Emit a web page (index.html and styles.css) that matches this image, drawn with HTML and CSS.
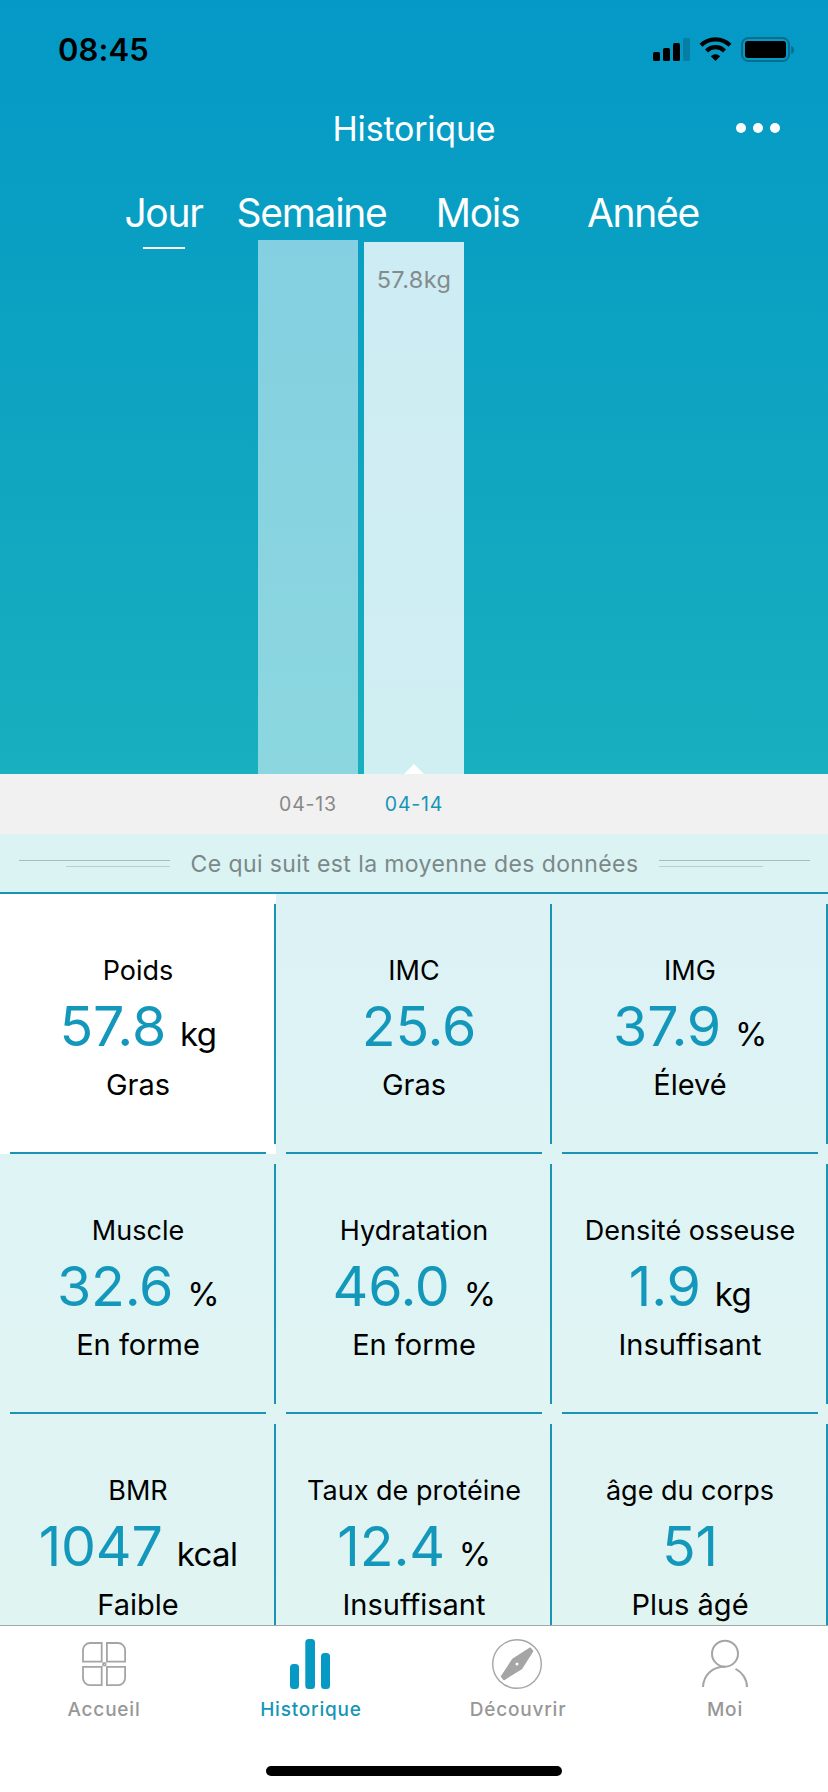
FILE: index.html
```html
<!DOCTYPE html>
<html lang="fr">
<head>
<meta charset="UTF-8">
<title>Historique</title>
<meta name="viewport" content="width=device-width, initial-scale=1.0">
<link rel="stylesheet" href="styles.css">
</head>
<body>
<div class="hero">
    <div class="status-bar">
        <span class="time">08:45</span>
        <svg class="status-icons" width="142" height="26" viewBox="0 0 142 26">
            <rect x="0" y="15" width="7" height="9" rx="1.5"/>
            <rect x="10" y="11" width="7" height="13" rx="1.5"/>
            <rect x="20" y="6" width="7" height="18" rx="1.5"/>
            <rect x="30" y="1" width="7" height="23" rx="1.5" fill="#067ea3"/>
            <g fill="none" stroke="#000" stroke-width="4.2">
                <path d="M48 8.3a20.6 20.6 0 0 1 29 0"/>
                <path d="M53.5 13.9a12.8 12.8 0 0 1 18 0"/>
            </g>
            <path d="M57.8 19.2a6.8 6.8 0 0 1 9.4 0L62.5 24z"/>
            <rect x="89" y="1" width="47" height="23" rx="6.5" fill="none" stroke="#0a6d8b" stroke-width="2"/>
            <rect x="92" y="4" width="41" height="17" rx="3"/>
            <path d="M138.2 9c3.8 1 3.8 7 0 8z" fill="#0a6d8b"/>
        </svg>
    </div>
    <div class="nav">
        <h1>Historique</h1>
        <div class="more"><i></i><i></i><i></i></div>
    </div>
    <div class="periods">
        <span class="active">Jour</span>
        <span>Semaine</span>
        <span>Mois</span>
        <span>Année</span>
    </div>
    <div class="chart">
        <div class="bar" style="height: 534px"></div>
        <div class="bar current" style="height: 532px">57.8kg</div>
    </div>
</div>
<div class="dates">
    <span>04-13</span>
    <span class="active">04-14</span>
</div>
<div class="notice">
    <div class="rule left"></div>
    <p>Ce qui suit est la moyenne des données</p>
    <div class="rule right"></div>
</div>
<div class="grid">
    <div class="cell selected">
        <p class="label">Poids</p>
        <p class="value">57.8<small>kg</small></p>
        <p class="state">Gras</p>
    </div>
    <div class="cell">
        <p class="label">IMC</p>
        <p class="value no-unit">25.6</p>
        <p class="state">Gras</p>
    </div>
    <div class="cell">
        <p class="label">IMG</p>
        <p class="value">37.9<small>%</small></p>
        <p class="state">Élevé</p>
    </div>
    <div class="cell">
        <p class="label">Muscle</p>
        <p class="value">32.6<small>%</small></p>
        <p class="state">En forme</p>
    </div>
    <div class="cell">
        <p class="label">Hydratation</p>
        <p class="value">46.0<small>%</small></p>
        <p class="state">En forme</p>
    </div>
    <div class="cell">
        <p class="label">Densité osseuse</p>
        <p class="value">1.9<small>kg</small></p>
        <p class="state">Insuffisant</p>
    </div>
    <div class="cell">
        <p class="label">BMR</p>
        <p class="value">1047<small>kcal</small></p>
        <p class="state">Faible</p>
    </div>
    <div class="cell">
        <p class="label">Taux de protéine</p>
        <p class="value">12.4<small>%</small></p>
        <p class="state">Insuffisant</p>
    </div>
    <div class="cell">
        <p class="label">âge du corps</p>
        <p class="value">51</p>
        <p class="state">Plus âgé</p>
    </div>
</div>
<div class="tab-bar">
    <div class="tabs">
        <div class="tab">
            <svg width="52" height="52" viewBox="0 0 52 52" fill="none" stroke="#a5a5a5" stroke-width="1.8">
                <path d="M12 5h11.7v18.7H5V12a7 7 0 0 1 7-7z"/>
                <path d="M28.9 5h11.2a7 7 0 0 1 7 7v11.7H28.9z"/>
                <path d="M5 28.9h18.7v18.2H12a7 7 0 0 1-7-7z"/>
                <path d="M28.9 28.9h18.2v11.2a7 7 0 0 1-7 7H28.9z"/>
                <circle cx="26.3" cy="26.3" r="1.4"/>
            </svg>
            <span>Accueil</span>
        </div>
        <div class="tab active">
            <svg width="52" height="52" viewBox="0 0 52 52" fill="#0599c3">
                <rect x="5" y="26" width="9" height="25" rx="3.5"/>
                <rect x="20.3" y="1" width="9.7" height="50" rx="3.5"/>
                <rect x="36" y="15" width="9" height="36" rx="3.5"/>
            </svg>
            <span>Historique</span>
        </div>
        <div class="tab">
            <svg width="52" height="52" viewBox="0 0 52 52">
                <circle cx="25" cy="26" r="24.3" fill="none" stroke="#a5a5a5" stroke-width="1.4"/>
                <path d="M38.2 10.2l2.4 3L29.5 30.5 12 41.5l-2.4-3L20.7 21.5z" fill="#a5a5a5" stroke="#a5a5a5" stroke-width="1.5" stroke-linejoin="round"/>
                <circle cx="25" cy="26" r="1.5" fill="#fff"/>
            </svg>
            <span>Découvrir</span>
        </div>
        <div class="tab">
            <svg width="52" height="52" viewBox="0 0 52 52" fill="none" stroke="#a5a5a5" stroke-width="2">
                <circle cx="26" cy="15.7" r="13"/>
                <path d="M4 49C4.5 37 13 28.8 26 28.8M36.5 30.8C43 34 48 41 48 49"/>
            </svg>
            <span>Moi</span>
        </div>
    </div>
    <div class="home-indicator"></div>
</div>
</body>
</html>
```
FILE: styles.css
```css
* {
    margin: 0;
    padding: 0;
    box-sizing: border-box;
}

body {
    display: flex;
    flex-direction: column;
    width: 828px;
    height: 1792px;
    overflow: hidden;
    background: #fff;
    font-family: Inter, "Liberation Sans", sans-serif;
    color: #000;
}

.hero {
    flex: none;
    display: flex;
    flex-direction: column;
    height: 774px;
    background: linear-gradient(#0499c7, #0aa0c2 35%, #18afbf);
}

/* status bar */
.status-bar {
    display: flex;
    justify-content: space-between;
    height: 88px;
    padding: 30px 33px 0 58px;
}

.time {
    font-size: 31px;
    font-weight: 600;
    line-height: 40px;
    letter-spacing: 0.1px;
}

.status-icons {
    margin-top: 7px;
}

.nav {
    display: grid;
    grid-template-columns: 1fr auto 1fr;
    align-items: center;
    height: 80px;
    padding: 0 48px;
}

.nav h1 {
    grid-column: 2;
    font-size: 34px;
    font-weight: 400;
    letter-spacing: -0.2px;
    color: #fff;
}

.more {
    display: flex;
    justify-content: flex-end;
    gap: 7px;
}

.more i {
    width: 10px;
    height: 10px;
    border-radius: 50%;
    background: #fff;
}

.periods {
    display: grid;
    grid-template-columns: 165px 131px 201px 130px;
    height: 72px;
    padding-left: 81px;
}

.periods span {
    display: flex;
    flex-direction: column;
    align-items: center;
    padding-top: 20px;
    line-height: 50px;
    font-size: 39px;
    font-weight: 400;
    letter-spacing: -1.3px;
    white-space: nowrap;
    color: #fff;
}

.periods .active:after {
    content: '';
    width: 42px;
    height: 2px;
    margin-top: 9px;
    background: #fff;
}

/* chart */
.chart {
    display: flex;
    align-items: flex-end;
    gap: 6px;
    height: 534px;
    padding-left: 258px;
}

.bar {
    width: 100px;
    background: rgba(255, 255, 255, 0.5);
}

.bar.current {
    display: flex;
    flex-direction: column;
    justify-content: space-between;
    align-items: center;
    padding-top: 22px;
    background: rgba(255, 255, 255, 0.8);
    font-size: 23.5px;
    line-height: 32px;
    letter-spacing: 0.4px;
    color: #838b8d;
}

.bar.current:after {
    content: '';
    border: 10px solid transparent;
    border-top: none;
    border-bottom-color: #fff;
}

.dates {
    flex: none;
    display: flex;
    gap: 6px;
    height: 60px;
    padding-left: 258px;
    background: #f1f1f1;
    color: #888;
    font-size: 19.5px;
    line-height: 61px;
    letter-spacing: 0.8px;
    text-align: center;
}

.dates span {
    width: 100px;
}

.dates .active {
    color: #1795b8;
}

.notice {
    flex: none;
    display: flex;
    justify-content: space-between;
    height: 60px;
    padding: 0 18px 0 19px;
    border-bottom: 2px solid #1b93b5;
    background: #dcf3f3;
}

.notice p {
    font-size: 23px;
    line-height: 60px;
    letter-spacing: 0.4px;
    color: #7b8889;
}

.rule {
    width: 151px;
    height: 7px;
    margin-top: 26px;
    border-top: 1px solid #a9bbbb;
}

.rule:after {
    content: '';
    display: block;
    width: 104px;
    height: 1px;
    margin-top: 5px;
    background: #bccfcf;
}

.rule.left:after {
    margin-left: 47px;
}

/* measures */
.grid {
    flex: none;
    display: grid;
    grid-template-columns: repeat(3, 276px);
    grid-auto-rows: 260px;
    height: 731px;
    overflow: hidden;
    background: linear-gradient(#ddf2f5, #e0f5f2);
}

.cell {
    padding-top: 60px;
    text-align: center;
    background:
        linear-gradient(#1b93b5, #1b93b5) 10px 258px / 256px 2px no-repeat,
        linear-gradient(#1b93b5, #1b93b5) 274px 10px / 2px 240px no-repeat;
}

.cell.selected {
    background-color: #fff;
}

.label {
    font-size: 27px;
    line-height: 34px;
}

.value {
    font-size: 55.5px;
    line-height: 76px;
    letter-spacing: -0.2px;
    color: #1398bc;
}

.value.no-unit {
    padding-left: 10px;
}

.value small {
    margin-left: 14px;
    font-size: 33px;
    line-height: 1;
    letter-spacing: -0.6px;
    color: #000;
}

.state {
    padding-top: 2px;
    font-size: 29px;
    line-height: 38px;
}

/* bottom bar */
.tab-bar {
    flex: 1;
    border-top: 1px solid #a0a8a8;
    background: #fff;
}

.tabs {
    display: grid;
    grid-template-columns: 208px 206px 208px 206px;
    height: 140px;
    padding-top: 12px;
}

.tab {
    display: flex;
    flex-direction: column;
    align-items: center;
    color: #979797;
    font-size: 19px;
    font-weight: 500;
    letter-spacing: 0.8px;
    line-height: 30px;
}

.tab span {
    margin-top: 5px;
}

.tab.active {
    color: #1795b8;
}

.home-indicator {
    width: 296px;
    height: 10px;
    margin: 0 auto;
    border-radius: 5px;
    background: #000;
}
```
